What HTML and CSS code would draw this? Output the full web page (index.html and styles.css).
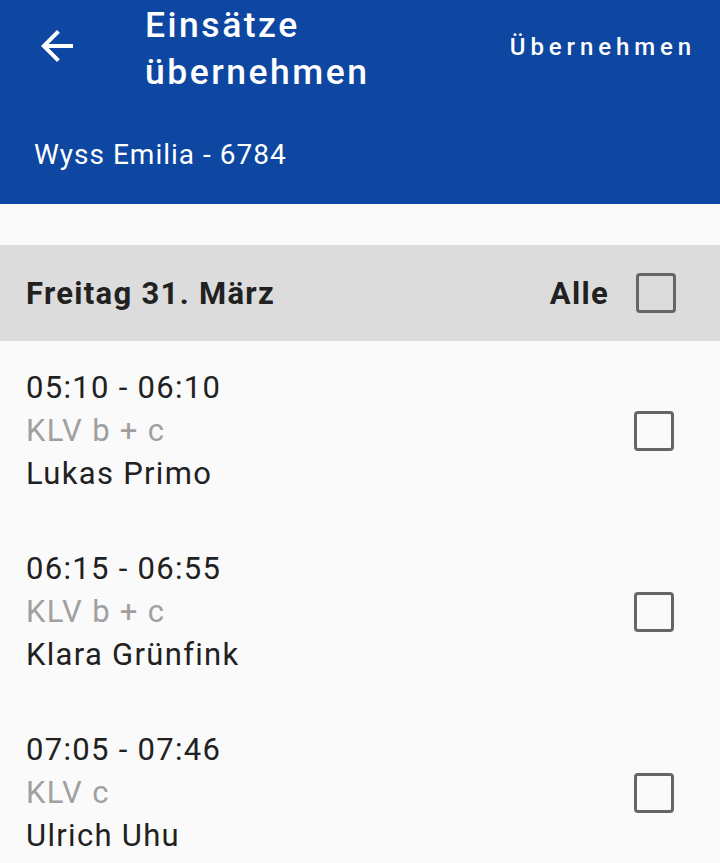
FILE: index.html
```html
<!DOCTYPE html>
<html lang="de">
<head>
    <meta charset="UTF-8">
    <meta name="viewport" content="width=device-width, initial-scale=1.0">
    <title>Einsätze übernehmen</title>
    <link rel="stylesheet" href="styles.css">
</head>
<body>
    <header class="appbar">
        <div class="appbar-top">
            <button class="back" aria-label="Zurück">
                <svg viewBox="0 0 24 24" width="48" height="48">
                    <path d="M20 11H7.83l5.59-5.59L12 4l-8 8 8 8 1.41-1.41L7.83 13H20v-2z" fill="#fff"/>
                </svg>
            </button>
            <h1 class="title">Einsätze<br>übernehmen</h1>
            <span class="action">Übernehmen</span>
        </div>
        <div class="subtitle">Wyss Emilia - 6784</div>
    </header>

    <main class="content">
        <div class="day-head">
            <span class="day">Freitag 31. März</span>
            <label class="all">Alle <span class="box"></span></label>
        </div>

        <div class="shift">
            <div class="shift-text">
                <div class="time">05:10 - 06:10</div>
                <div class="kind">KLV b + c</div>
                <div class="person">Lukas Primo</div>
            </div>
            <span class="box"></span>
        </div>

        <div class="shift">
            <div class="shift-text">
                <div class="time">06:15 - 06:55</div>
                <div class="kind">KLV b + c</div>
                <div class="person">Klara Grünfink</div>
            </div>
            <span class="box"></span>
        </div>

        <div class="shift">
            <div class="shift-text">
                <div class="time">07:05 - 07:46</div>
                <div class="kind">KLV c</div>
                <div class="person">Ulrich Uhu</div>
            </div>
            <span class="box"></span>
        </div>
    </main>
</body>
</html>
```

FILE: styles.css
```css
body, html {
    margin: 0;
    background-color: #fafafa;
    font-family: Roboto, "Liberation Sans", sans-serif;
    overflow: hidden;
}

/* Blue app bar */
.appbar {
    background-color: #0d47a1;
    color: white;
    height: 204px;
    box-sizing: border-box;
}

.appbar-top {
    display: flex;
    align-items: flex-start;
}

.back {
    background: none;
    border: 0;
    padding: 0;
    margin: 22px 0 0 33px;
    width: 48px;
    height: 48px;
    display: flex;
}

.title {
    margin: 2px 0 0 64px;
    font-size: 35.5px;
    font-weight: 500;
    line-height: 47px;
    letter-spacing: 2.5px;
    flex: 1;
}

.action {
    margin: 33px 24px 0 0;
    font-size: 24px;
    font-weight: 500;
    letter-spacing: 4.9px;
}

.subtitle {
    margin: 39px 0 0 34px;
    font-size: 28px;
    line-height: 40px;
    letter-spacing: 1px;
}

/* List */
.content {
    padding-top: 41px;
}

.day-head {
    background-color: #dcdcdc;
    height: 96px;
    display: flex;
    align-items: center;
    justify-content: space-between;
    padding: 0 44px 0 26px;
}

.day {
    font-size: 31px;
    font-weight: 700;
    letter-spacing: 1.3px;
    color: #212121;
}

.all {
    display: flex;
    align-items: center;
    gap: 27px;
    font-size: 31px;
    font-weight: 700;
    letter-spacing: 1.3px;
    color: #212121;
}

.box {
    width: 40px;
    height: 40px;
    box-sizing: border-box;
    border: 3.5px solid #666;
    border-radius: 4px;
    display: block;
}

.shift {
    display: flex;
    align-items: center;
    justify-content: space-between;
    padding: 25px 46px 27px 26px;
}

.shift-text {
    font-size: 31px;
    line-height: 43px;
    letter-spacing: 1.3px;
    color: #212121;
}

.kind {
    color: #a0a0a0;
}
```
